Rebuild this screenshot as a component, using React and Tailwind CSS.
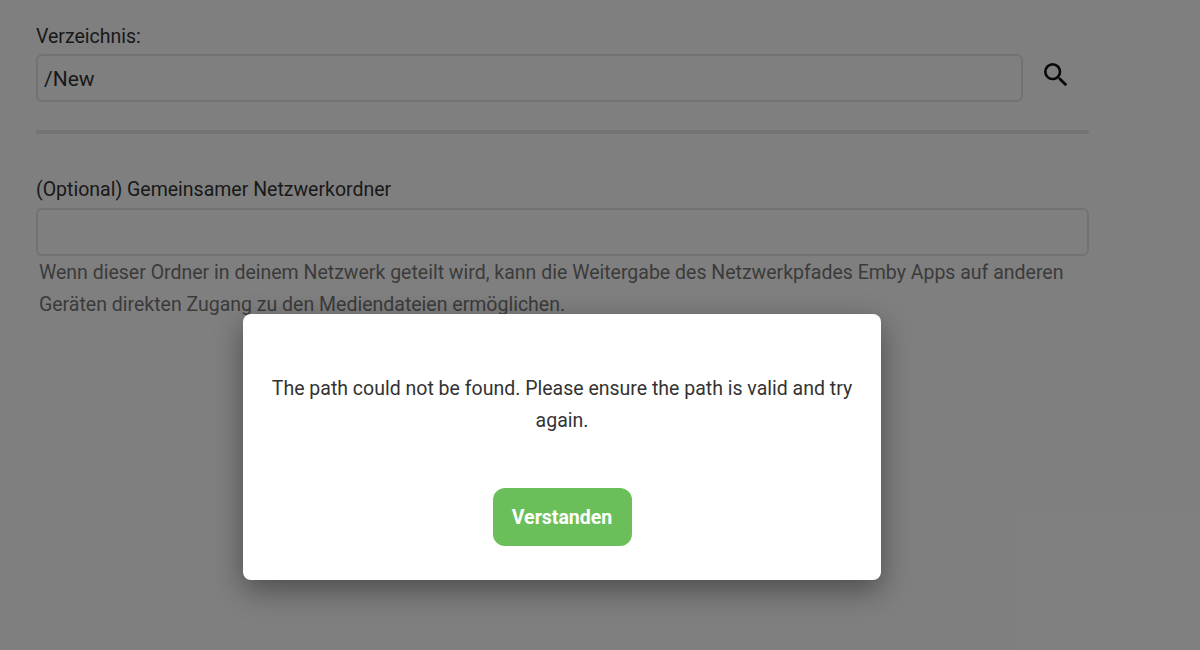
function SearchIcon() {
  return (
    <svg viewBox="0 0 24 24" className="ml-[17px] -mt-1.5 h-8 w-8 fill-[#111]">
      <path d="M15.5 14h-.79l-.28-.27A6.471 6.471 0 0 0 16 9.5 6.5 6.5 0 1 0 9.5 16c1.61 0 3.09-.59 4.23-1.57l.27.28v.79l5 4.99L20.49 19l-4.99-5zm-6 0C7.01 14 5 11.99 5 9.5S7.01 5 9.5 5 14 7.01 14 9.5 11.99 14 9.5 14z" />
    </svg>
  );
}

function App() {
  return (
    <div className="relative h-[650px] w-[1200px] overflow-hidden bg-white font-['Roboto',sans-serif] text-[19.5px] text-[#333]">
      <div className="w-[1089px] pl-9 pt-6">
        <label className="block h-[30px] leading-[26px]">Verzeichnis:</label>
        <div className="flex items-center">
          <div className="flex h-12 w-[987px] items-center rounded-md border-2 border-[#e4e4e4] px-1.5 pt-1 text-[21px] text-[#333]">
            /New
          </div>
          <SearchIcon />
        </div>
        <div className="mt-7 h-1 rounded-sm bg-[#e8e8e8]" />
        <label className="mt-[43px] block h-[31px] leading-[26px]">
          (Optional) Gemeinsamer Netzwerkordner
        </label>
        <div className="h-12 rounded-md border-2 border-[#e4e4e4]" />
        <p className="pl-[3px] pt-px leading-8 text-[#777]">
          Wenn dieser Ordner in deinem Netzwerk geteilt wird, kann die Weitergabe des Netzwerkpfades Emby Apps auf anderen
          Geräten direkten Zugang zu den Mediendateien ermöglichen.
        </p>
      </div>

      <div className="absolute inset-0 bg-black/50" />

      <div
        role="dialog"
        aria-modal="true"
        className="absolute left-[243px] top-[314px] flex h-[266px] w-[638px] flex-col items-center rounded-lg bg-white px-6 pt-[59px] text-center text-[#333] shadow-[0_10px_30px_rgba(0,0,0,0.4)]"
      >
        <p className="leading-8">The path could not be found. Please ensure the path is valid and try again.</p>
        <button
          type="button"
          className="mt-[51px] h-[58px] w-[139px] rounded-xl bg-[#6bbf5b] pt-0.5 font-bold text-white"
        >
          Verstanden
        </button>
      </div>
    </div>
  );
}

export default App;
